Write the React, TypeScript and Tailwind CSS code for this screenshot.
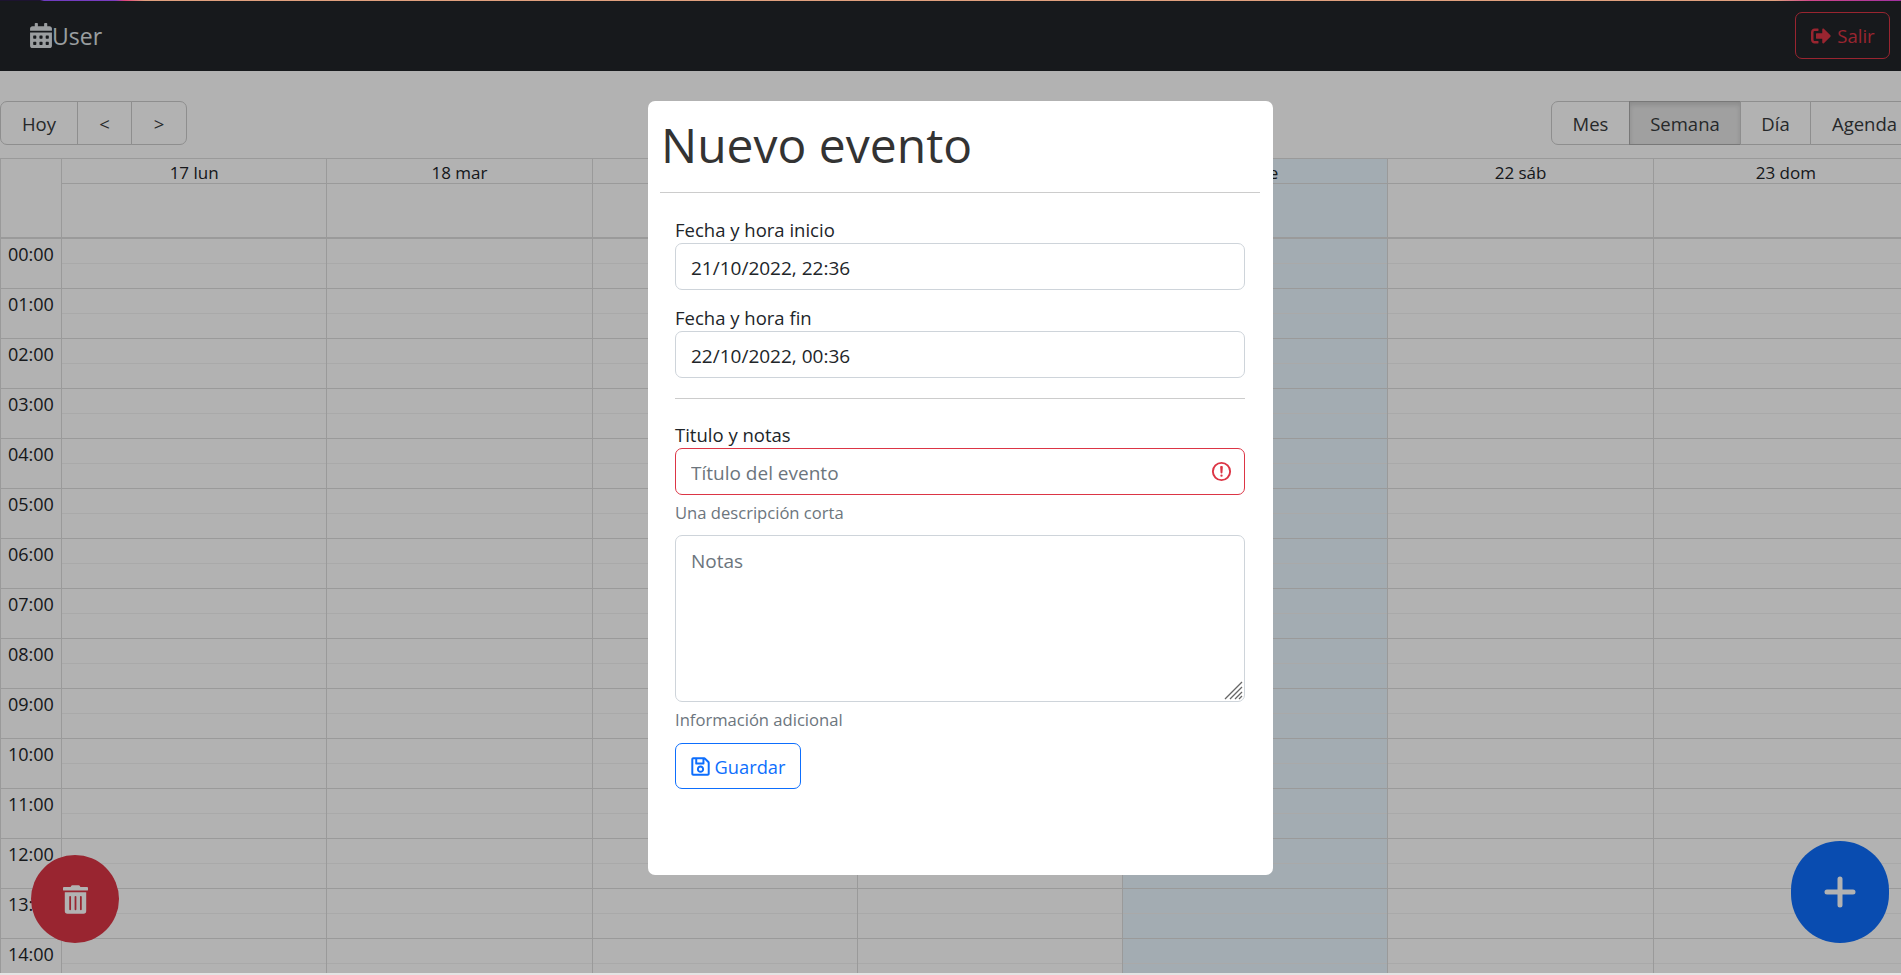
import { FaCalendarAlt, FaRegSave, FaSignOutAlt, FaTrashAlt } from "react-icons/fa";

const days = ["17 lun", "18 mar", "19 mié", "20 jue", "21 vie", "22 sáb", "23 dom"];
const hours = Array.from({ length: 15 }, (_, i) => `${String(i).padStart(2, "0")}:00`);

function ToolButton({ label, active, className }: { label: string; active?: boolean; className?: string }) {
  return (
    <button
      className={`h-[44px] border pt-[2px] text-[#373a3c] text-[18.5px] ${
        active ? "bg-[#e6e6e6] border-[#adadad] shadow-[inset_0_3px_5px_rgba(0,0,0,0.125)]" : "bg-white border-[#ccc]"
      } ${className ?? ""}`}
    >
      {label}
    </button>
  );
}

function Calendar() {
  return (
    <div className="w-[1920px] mt-[13px] border-x border-t border-[#ddd]">
      <div className="grid grid-cols-[61px_repeat(7,1fr)] h-[80px] border-b-2 border-[#ddd]">
        <div className="border-r border-[#ddd]" />
        {days.map((d, i) => (
          <div key={d} className={`border-r border-[#ddd] ${i === 4 ? "bg-[#eaf6ff]" : ""}`}>
            <div className="h-[25px] border-b border-[#ddd] text-center text-[17px] leading-[28px] text-[#212529]">{d}</div>
          </div>
        ))}
      </div>
      {hours.map((h) => (
        <div key={h} className="grid grid-cols-[61px_repeat(7,1fr)] h-[50px] border-b border-[#ddd]">
          <div className="border-r border-[#ddd] pl-[7px] pt-[3px] text-[18px] leading-[24px] text-[#212529]">{h}</div>
          {days.map((d, i) => (
            <div key={d} className={`border-r border-[#ddd] ${i === 4 ? "bg-[#eaf6ff]" : ""}`}>
              <div className="h-[25px] border-b border-[#f2f2f2]" />
            </div>
          ))}
        </div>
      ))}
    </div>
  );
}

function Modal() {
  const control = "block w-full h-[47px] rounded-[7px] border border-[#ced4da] px-[15px] pt-[2px] text-[19px] text-[#212529] bg-white outline-none";
  return (
    <div className="w-[625px] h-[774px] mt-[101px] bg-white rounded-[7px] pl-[12px] pr-[13px] pt-[13px]">
      <h1 className="text-[48px] leading-[62px] font-normal text-[#333] pl-[1px]">Nuevo evento</h1>
      <hr className="mt-[16px] border-[#ccc]" />
      <div className="pl-[15px] pr-[15px] pt-[24px]">
        <label className="block text-[18.5px] leading-[26px] text-[#212529]">Fecha y hora inicio</label>
        <input className={control} readOnly defaultValue="21/10/2022, 22:36" />
        <label className="block mt-[14px] text-[18.5px] leading-[27px] text-[#212529]">Fecha y hora fin</label>
        <input className={control} readOnly defaultValue="22/10/2022, 00:36" />
        <hr className="mt-[20px] border-[#ccc]" />
        <label className="block mt-[23px] text-[18.5px] leading-[26px] text-[#212529]">Titulo y notas</label>
        <div className="relative">
          <input
            className="block w-full h-[47px] rounded-[7px] border border-[#dc3545] px-[15px] pt-[2px] text-[19px] bg-white outline-none placeholder:text-[#6c757d]"
            placeholder="Título del evento"
          />
          <svg className="absolute right-[12px] top-[12px] w-[23px] h-[23px]" viewBox="0 0 12 12" fill="none" stroke="#dc3545">
            <circle cx="6" cy="6" r="4.5" />
            <path strokeLinejoin="round" d="M5.8 3.6h.4L6 6.5z" />
            <circle cx="6" cy="8.2" r=".6" fill="#dc3545" stroke="none" />
          </svg>
        </div>
        <p className="mt-[5px] text-[16.6px] leading-[26px] text-[#6c757d]">Una descripción corta</p>
        <div className="relative mt-[9px]">
          <textarea
            className="block w-full h-[167px] rounded-[7px] border border-[#ced4da] px-[15px] pt-[12px] text-[19px] leading-[27px] bg-white outline-none resize-none placeholder:text-[#6c757d]"
            placeholder="Notas"
          />
          <svg className="absolute right-[2px] bottom-[2px] w-[19px] h-[19px]" viewBox="0 0 19 19" stroke="#666" strokeWidth="1.3">
            <path d="M1 18 18 1M6 18 18 6M11 18l7-7M15 18l3-3" />
          </svg>
        </div>
        <p className="mt-[5px] text-[16.6px] leading-[26px] text-[#6c757d]">Información adicional</p>
        <button className="mt-[10px] h-[46px] w-[126px] justify-center rounded-[7px] border border-[#0d6efd] text-[#0d6efd] text-[18.3px] flex items-center gap-[5px]">
          <FaRegSave className="w-[19px] h-[21px]" />
          <span className="pt-[2px]">Guardar</span>
        </button>
      </div>
    </div>
  );
}

export default function App() {
  return (
    <div className="relative h-screen overflow-hidden bg-white font-['Open_Sans',sans-serif]">
      <nav className="h-[71px] bg-[#212529] flex items-center justify-between pl-[30px] pr-[11px]">
        <div className="flex items-center text-[23px] text-[#dee2e6]">
          <FaCalendarAlt className="w-[22px] h-[25px]" />
          <span className="pt-[2px]">User</span>
        </div>
        <button className="h-[47px] w-[95px] rounded-[7px] border border-[#dc3545] text-[#dc3545] text-[18.5px] flex items-center justify-center gap-[5px]">
          <FaSignOutAlt className="w-[22px] h-[20px]" />
          <span className="pt-px">Salir</span>
        </button>
      </nav>
      <div className="w-[1919px] pt-[30px]">
        <div className="flex justify-between">
          <div className="flex">
            <ToolButton label="Hoy" className="rounded-l-[7px] w-[78px]" />
            <ToolButton label="<" className="w-[55px] -ml-px" />
            <ToolButton label=">" className="w-[56px] -ml-px rounded-r-[7px]" />
          </div>
          <div className="flex">
            <ToolButton label="Mes" className="rounded-l-[7px] w-[79px]" />
            <ToolButton label="Semana" active className="w-[112px] -ml-px" />
            <ToolButton label="Día" className="w-[71px] -ml-px" />
            <ToolButton label="Agenda" className="w-[109px] -ml-px rounded-r-[7px]" />
          </div>
        </div>
        <Calendar />
      </div>
      <button className="absolute left-[31px] top-[855px] w-[88px] h-[88px] rounded-full bg-[#dc3545] text-white flex items-center justify-center">
        <FaTrashAlt className="w-[25px] h-[29px]" />
      </button>
      <button className="absolute left-[1791px] top-[841px] w-[98px] h-[102px] rounded-full bg-[#0d6efd] text-white flex items-center justify-center">
        <svg className="w-[32px] h-[32px]" viewBox="0 0 32 32" stroke="currentColor" strokeWidth="5" strokeLinecap="round">
          <path d="M16 3v26M3 16h26" />
        </svg>
      </button>
      <div className="absolute inset-y-0 left-0 w-[1921px] bg-black/30 flex justify-center items-start">
        <Modal />
      </div>
      <div className="absolute top-0 inset-x-0 h-px bg-[linear-gradient(90deg,#1d1330_0px,#1d1330_40px,#6f3cc0_44px,#7a3cc0_115px,#e0447a_125px,#e0a07e_145px,#e0a07e_1775px,#d0468a_1810px,#a030a0_1901px)]" />
      <div className="absolute bottom-0 inset-x-0 h-[2px] bg-[#e4e4e4]" />
    </div>
  );
}
